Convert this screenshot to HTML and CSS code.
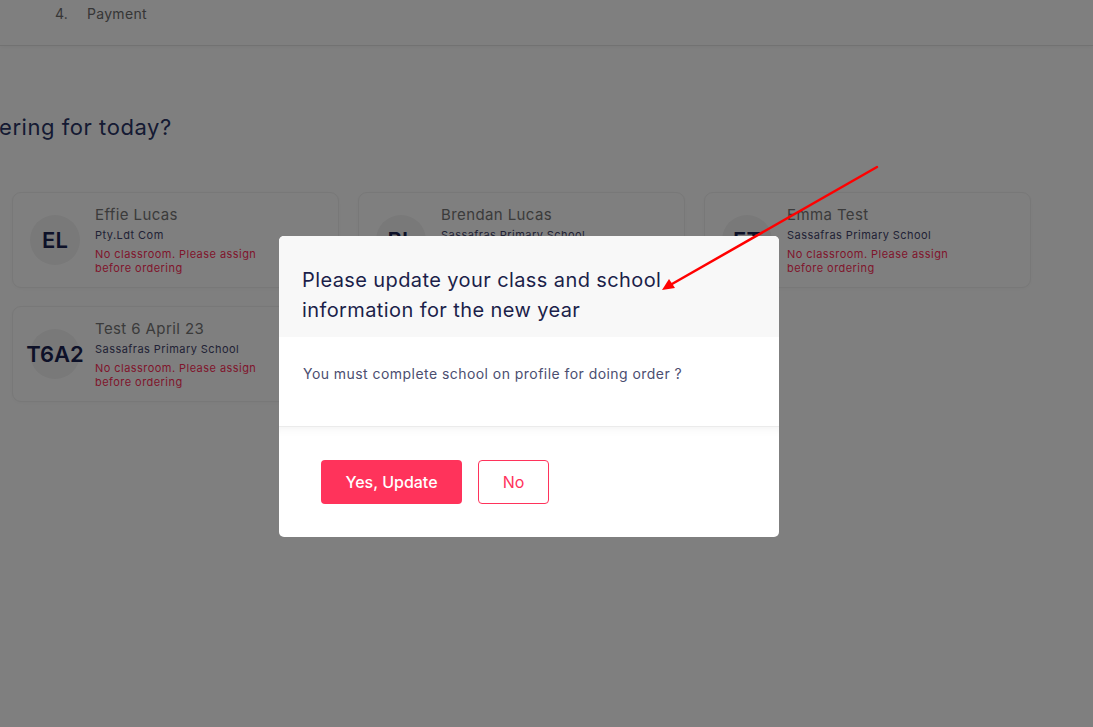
FILE: index.html
```html
<!DOCTYPE html>
<html lang="en">
<head>
<meta charset="utf-8">
<title>Who are you ordering for today?</title>
<link rel="stylesheet" href="styles.css">
</head>
<body>
<header class="steps">
  <ol class="step-list">
    <li class="step"><span class="step-num">4.</span><span class="step-label">Payment</span></li>
  </ol>
</header>
<main class="page">
  <h1 class="page-title">ering for today?</h1>
  <div class="cards">
    <div class="card">
      <div class="avatar">EL</div>
      <div class="info">
        <div class="name">Effie Lucas</div>
        <div class="school">Pty.Ldt Com</div>
        <div class="warn">No classroom. Please assign before ordering</div>
      </div>
    </div>
    <div class="card">
      <div class="avatar">BL</div>
      <div class="info">
        <div class="name">Brendan Lucas</div>
        <div class="school">Sassafras Primary School</div>
        <div class="warn">No classroom. Please assign before ordering</div>
      </div>
    </div>
    <div class="card">
      <div class="avatar">ET</div>
      <div class="info">
        <div class="name">Emma Test</div>
        <div class="school">Sassafras Primary School</div>
        <div class="warn">No classroom. Please assign before ordering</div>
      </div>
    </div>
    <div class="card">
      <div class="avatar">T6A2</div>
      <div class="info">
        <div class="name">Test 6 April 23</div>
        <div class="school">Sassafras Primary School</div>
        <div class="warn">No classroom. Please assign before ordering</div>
      </div>
    </div>
  </div>
</main>
<div class="backdrop"></div>
<div class="modal" role="dialog">
  <div class="modal-head">
    <h2 class="modal-title">Please update your class and school information for the new year</h2>
  </div>
  <div class="modal-body">
    <p class="modal-text">You must complete school on profile for doing order ?</p>
  </div>
  <div class="modal-foot">
    <button class="btn btn-primary">Yes, Update</button>
    <button class="btn btn-outline">No</button>
  </div>
</div>
<svg class="annotation" width="1093" height="727" viewBox="0 0 1093 727">
  <line x1="877" y1="167" x2="672" y2="284" stroke="#ff0000" stroke-width="2.5" stroke-linecap="round"/>
  <polygon points="662,290 669,279 675,288" fill="#ff0000"/>
</svg>
</body>
</html>
```
FILE: styles.css
```css
* { box-sizing: border-box; }
html, body { margin: 0; padding: 0; }
body {
  width: 1093px;
  height: 727px;
  overflow: hidden;
  background: #ffffff;
  font-family: Inter, "Noto Sans", "DejaVu Sans", sans-serif;
  position: relative;
}
.steps {
  height: 46px;
  border-bottom: 1px solid #e4e4e4;
  box-shadow: 0 2px 4px rgba(0,0,0,0.03);
}
.step-list { list-style: none; margin: 0; padding: 3px 0 0 55px; }
.step { display: flex; align-items: center; height: 20px; font-size: 14px; color: #6c6c6c; letter-spacing: 0.3px; }
.step-num { width: 32px; }
.page { padding: 66px 0 0 0; }
.page-title {
  margin: 0;
  font-size: 22px;
  font-weight: 400;
  line-height: 30px;
  letter-spacing: 0.55px;
  color: #2a3566;
  margin-left: -1px;
}
.cards {
  margin: 50px 0 0 12px;
  display: grid;
  grid-template-columns: repeat(3, 327px);
  column-gap: 19px;
  row-gap: 18px;
}
.card {
  height: 96px;
  border: 1px solid #f0f0f0;
  border-radius: 9px;
  background: #fff;
  display: flex;
  align-items: center;
  padding: 0 8px 0 17px;
  gap: 15px;
  box-shadow: 0 1px 4px rgba(0,0,0,0.03);
}
.avatar {
  width: 50px;
  height: 50px;
  flex: none;
  border-radius: 50%;
  background: #f2f2f2;
  display: flex;
  align-items: center;
  justify-content: center;
  font-size: 22px;
  font-weight: 600;
  color: #1b2350;
  white-space: nowrap;
}
.info { display: flex; flex-direction: column; padding-top: 0; }
.name { font-size: 15px; line-height: 20px; color: #767676; letter-spacing: 0.4px; }
.school { font-size: 11px; line-height: 15px; color: #43456c; margin-top: 3px; letter-spacing: 0.45px; }
.warn { font-size: 11px; line-height: 14px; color: #ff2d58; margin-top: 4px; width: 175px; letter-spacing: 0.45px; }

.backdrop {
  position: absolute;
  inset: 0;
  background: rgba(0,0,0,0.5);
}
.modal {
  position: absolute;
  left: 279px;
  top: 236px;
  width: 500px;
  background: #fff;
  border-radius: 5px;
  overflow: hidden;
}
.modal-head { background: #f8f8f8; padding: 29px 23px 12px 23px; }
.modal-title {
  margin: 0;
  font-size: 20px;
  font-weight: 400;
  line-height: 30px;
  letter-spacing: 0.4px;
  color: #1c1f4a;
}
.modal-body { padding: 27px 24px 42px 24px; border-bottom: 1px solid #ebebeb; }
.modal-text { margin: 0; font-size: 14px; line-height: 20px; color: #4b4e70; letter-spacing: 0.45px; }
.modal-foot {
  padding: 33px 42px 33px 42px;
  display: flex;
  gap: 16px;
  box-shadow: inset 0 10px 10px -8px rgba(0,0,0,0.05);
}
.btn {
  height: 44px;
  border-radius: 4px;
  font-family: inherit;
  font-size: 16px;
  font-weight: 500;
  cursor: pointer;
}
.btn-primary { width: 141px; background: #ff335b; border: none; color: #fff; }
.btn-outline { width: 71px; background: #fff; border: 1px solid #ff335b; color: #ff335b; font-weight: 400; }
.annotation { position: absolute; left: 0; top: 0; pointer-events: none; }
```
